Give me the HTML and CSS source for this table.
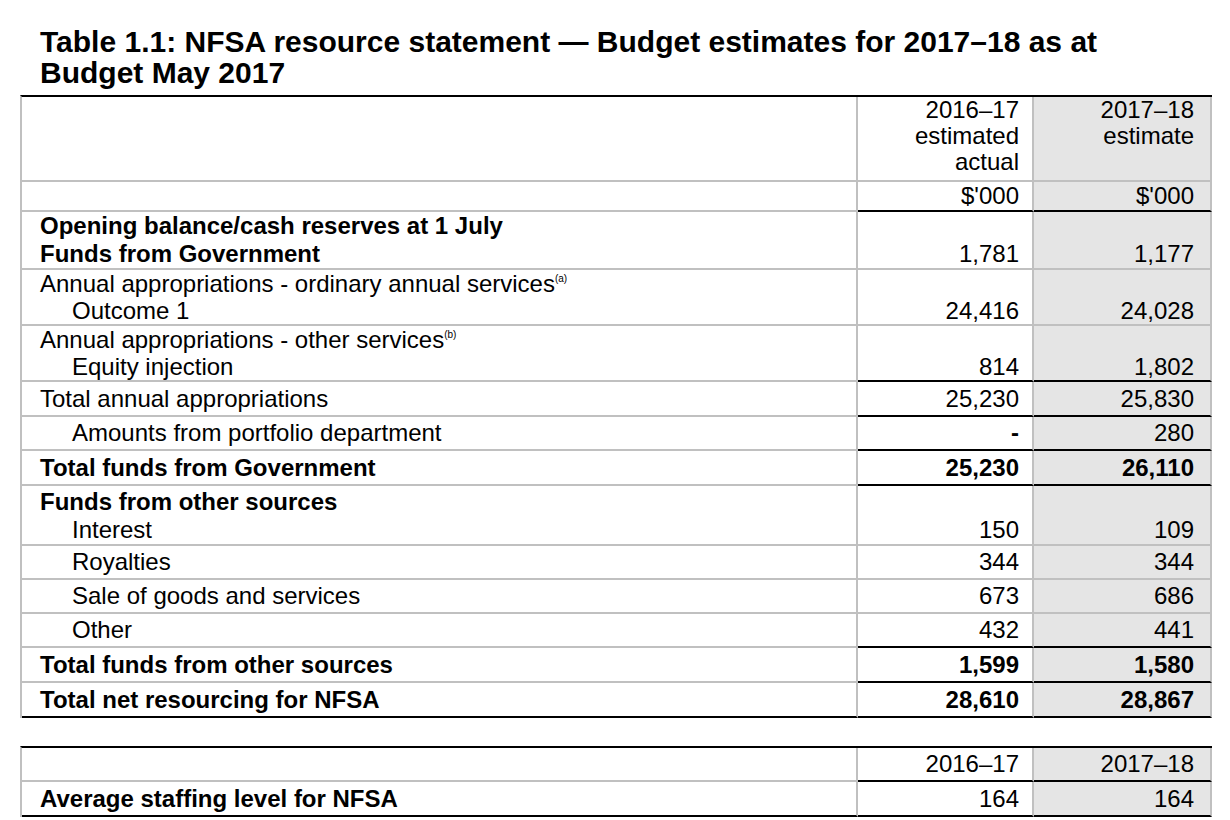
FILE: index.html
```html
<!DOCTYPE html>
<html lang="en">
<head>
<meta charset="utf-8">
<title>Table 1.1: NFSA resource statement</title>
<link rel="stylesheet" href="styles.css">
</head>
<body>
<div class="page">
  <h1 class="title">Table 1.1: NFSA resource statement — Budget estimates for 2017–18 as at Budget May 2017</h1>
  <table class="rs">
    <colgroup><col class="c1"><col class="c2"><col class="c3"></colgroup>
    <tbody>
      <tr class="hd1">
        <td></td>
        <td class="n">2016–17<br>estimated<br>actual</td>
        <td class="n n3">2017–18<br>estimate</td>
      </tr>
      <tr class="hd2">
        <td></td>
        <td class="n bk">$'000</td>
        <td class="n n3 bk">$'000</td>
      </tr>
      <tr class="two">
        <td class="b">Opening balance/cash reserves at 1 July<br>Funds from Government</td>
        <td class="n">1,781</td>
        <td class="n n3">1,177</td>
      </tr>
      <tr class="two tight">
        <td>Annual appropriations - ordinary annual services<sup>(a)</sup><br><span class="ind">Outcome 1</span></td>
        <td class="n">24,416</td>
        <td class="n n3">24,028</td>
      </tr>
      <tr class="two tight">
        <td>Annual appropriations - other services<sup>(b)</sup><br><span class="ind">Equity injection</span></td>
        <td class="n bk">814</td>
        <td class="n n3 bk">1,802</td>
      </tr>
      <tr class="one tall">
        <td>Total annual appropriations</td>
        <td class="n bk">25,230</td>
        <td class="n n3 bk">25,830</td>
      </tr>
      <tr class="one">
        <td><span class="ind">Amounts from portfolio department</span></td>
        <td class="n bk dash">-</td>
        <td class="n n3 bk">280</td>
      </tr>
      <tr class="one tall">
        <td class="b">Total funds from Government</td>
        <td class="n bk b">25,230</td>
        <td class="n n3 bk b">26,110</td>
      </tr>
      <tr class="two loose">
        <td><span class="b">Funds from other sources</span><br><span class="ind">Interest</span></td>
        <td class="n">150</td>
        <td class="n n3">109</td>
      </tr>
      <tr class="one">
        <td><span class="ind">Royalties</span></td>
        <td class="n">344</td>
        <td class="n n3">344</td>
      </tr>
      <tr class="one">
        <td><span class="ind">Sale of goods and services</span></td>
        <td class="n">673</td>
        <td class="n n3">686</td>
      </tr>
      <tr class="one">
        <td><span class="ind">Other</span></td>
        <td class="n bk">432</td>
        <td class="n n3 bk">441</td>
      </tr>
      <tr class="one tall">
        <td class="b">Total funds from other sources</td>
        <td class="n bk b">1,599</td>
        <td class="n n3 bk b">1,580</td>
      </tr>
      <tr class="one tall last">
        <td class="b">Total net resourcing for NFSA</td>
        <td class="n b">28,610</td>
        <td class="n n3 b">28,867</td>
      </tr>
    </tbody>
  </table>

  <table class="rs staff">
    <colgroup><col class="c1"><col class="c2"><col class="c3"></colgroup>
    <tbody>
      <tr class="one">
        <td></td>
        <td class="n bk">2016–17</td>
        <td class="n n3 bk">2017–18</td>
      </tr>
      <tr class="one tall last">
        <td class="b">Average staffing level for NFSA</td>
        <td class="n">164</td>
        <td class="n n3">164</td>
      </tr>
    </tbody>
  </table>
</div>
</body>
</html>
```

FILE: styles.css
```css
html, body {
  margin: 0;
  padding: 0;
  background: #ffffff;
}

body {
  font-family: "Liberation Sans", Arial, Helvetica, sans-serif;
  color: #000000;
}

.page {
  padding: 26px 0 0 20px;
}

.title {
  margin: 0 0 7px 20px;
  width: 1120px;
  font-size: 30px;
  font-weight: bold;
  line-height: 31px;
}

.rs {
  width: 1192px;
  table-layout: fixed;
  border-collapse: separate;
  border-spacing: 0;
  border-top: 2px solid #000000;
  border-left: 2px solid #c0c0c0;
  font-size: 24px;
  line-height: 28px;
}

.rs .c1 { width: 836px; }
.rs .c2 { width: 176px; }
.rs .c3 { width: 178px; }

.rs td {
  padding: 0 13px 0 18px;
  border-bottom: 2px solid #c0c0c0;
  border-right: 2px solid #c0c0c0;
  vertical-align: bottom;
  white-space: nowrap;
}

.rs tr.hd1 td {
  padding-top: 0;
  padding-bottom: 5px;
  line-height: 26px;
  vertical-align: top;
}

.rs tr.hd2 td {
  line-height: 28px;
}

.rs tr.tight td {
  line-height: 27px;
}

.rs tr.loose td {
  padding-top: 2px;
}

.rs tr.one td {
  padding-top: 2px;
  padding-bottom: 2px;
  vertical-align: middle;
}

.rs tr.one.tall td {
  padding-top: 3px;
}

.rs td.n {
  text-align: right;
  padding-left: 4px;
  padding-right: 13px;
}

.rs td.n3 {
  background: #e5e5e5;
  padding-right: 16px;
}

.rs td.bk {
  border-bottom-color: #000000;
}

.rs tr.last td {
  border-bottom-color: #000000;
}

.b {
  font-weight: bold;
}

.ind {
  padding-left: 32px;
}

.dash {
  font-weight: bold;
}

sup {
  font-size: 10px;
  line-height: 0;
  vertical-align: 10px;
}

.staff {
  margin-top: 28px;
}
```
